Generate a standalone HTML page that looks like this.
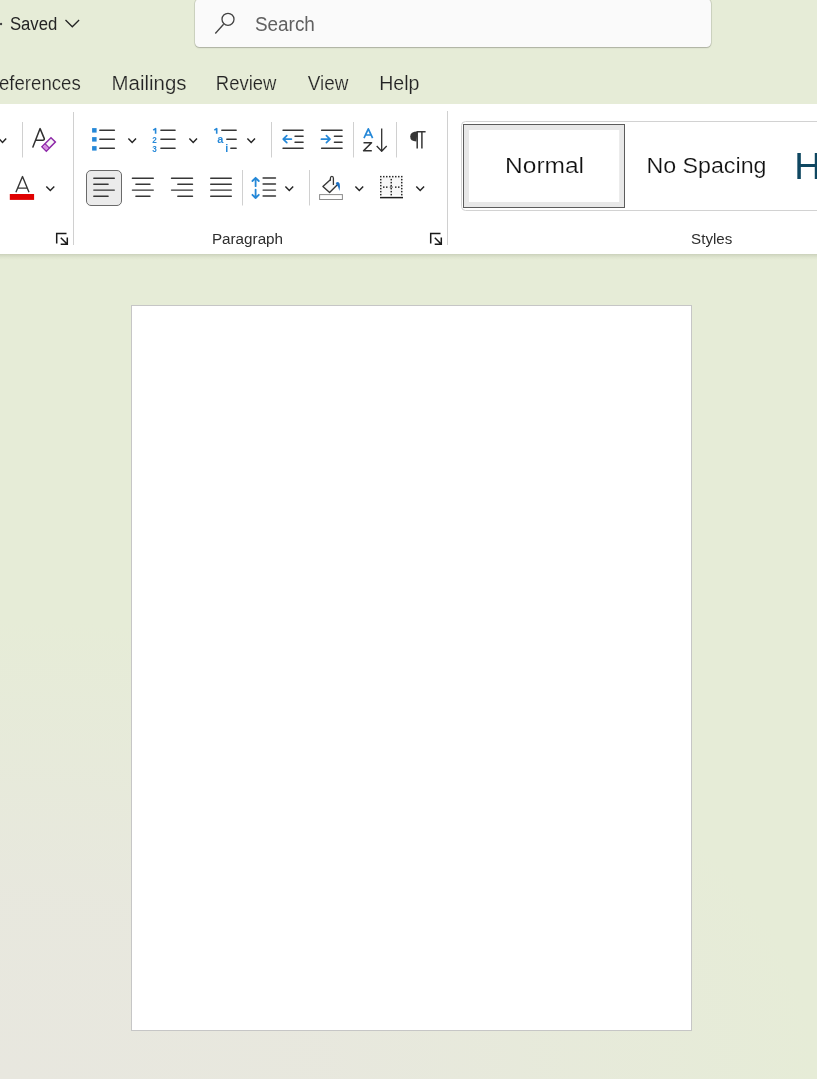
<!DOCTYPE html>
<html><head><meta charset="utf-8">
<style>
html,body{margin:0;padding:0;}
body{width:817px;height:1079px;overflow:hidden;position:relative;
background:radial-gradient(ellipse 820px 460px at 0px 1079px,rgba(232,231,223,1) 0%,rgba(232,231,223,0.85) 40%,rgba(232,231,223,0.4) 70%,rgba(232,231,223,0) 100%),#e6ecd7;
font-family:"Liberation Sans",sans-serif;}
.abs{position:absolute;}
#search{left:194.5px;top:-1px;width:516.5px;height:47.5px;background:#fafafa;border-radius:4.5px;
box-shadow:0 0 0 0.7px rgba(0,0,0,0.12),0 1px 1.5px rgba(0,0,0,0.18);}
#ribbon{left:-10px;top:104px;width:840px;height:150px;background:#ffffff;border-radius:0;
}
#rshadow{left:0;top:254px;width:817px;height:6px;background:linear-gradient(to bottom,rgba(60,70,40,0.16),rgba(60,70,40,0.10) 25%,rgba(60,70,40,0.04) 60%,rgba(60,70,40,0));}
#page{left:131px;top:305px;width:559px;height:724px;background:#fff;border:1px solid #c6c6c6;}
svg{position:absolute;left:0;top:0;will-change:transform;}
</style></head>
<body>
<div id="search" class="abs"></div>
<div id="ribbon" class="abs"></div>
<div id="rshadow" class="abs"></div>
<div id="page" class="abs"></div>
<svg width="817" height="1079" viewBox="0 0 817 1079" font-family="Liberation Sans, sans-serif">
  <!-- title bar -->
  <circle cx="1" cy="24" r="1.2" fill="#424242"/>
  <text id="t_saved" x="9.90" y="30.1" font-size="18" fill="#242424" textLength="47.40" lengthAdjust="spacingAndGlyphs">Saved</text>
  <path d="M65.5 20 L72.3 26.8 L79.1 20" fill="none" stroke="#242424" stroke-width="1.3"/>
  <!-- search -->
  <circle cx="228" cy="19.3" r="6" fill="none" stroke="#424242" stroke-width="1.3"/>
  <path d="M223.6 24.2 L215.3 33.5" fill="none" stroke="#424242" stroke-width="1.3"/>
  <text id="t_search" x="254.90" y="30.8" font-size="19.5" fill="#616161" textLength="60.00" lengthAdjust="spacingAndGlyphs">Search</text>
  <!-- tabs -->
  <text id="t_ref" x="-1.00" y="89.8" font-size="20" fill="#242424" textLength="81.70" lengthAdjust="spacingAndGlyphs" stroke="#e6ecd7" stroke-width="0.2">eferences</text>
  <text id="t_mail" x="111.60" y="89.8" font-size="20" fill="#242424" textLength="74.90" lengthAdjust="spacingAndGlyphs" stroke="#e6ecd7" stroke-width="0.2">Mailings</text>
  <text id="t_rev" x="215.80" y="89.8" font-size="20" fill="#242424" textLength="60.60" lengthAdjust="spacingAndGlyphs" stroke="#e6ecd7" stroke-width="0.2">Review</text>
  <text id="t_view" x="307.80" y="89.8" font-size="20" fill="#242424" textLength="40.60" lengthAdjust="spacingAndGlyphs" stroke="#e6ecd7" stroke-width="0.2">View</text>
  <text id="t_help" x="379.20" y="89.8" font-size="20" fill="#242424" textLength="40.30" lengthAdjust="spacingAndGlyphs" stroke="#e6ecd7" stroke-width="0.2">Help</text>

  <!-- ribbon separators -->
  <g stroke="#d0d0d0" stroke-width="1">
    <line x1="22.5" y1="122" x2="22.5" y2="157.5"/>
    <line x1="73.5" y1="112" x2="73.5" y2="245"/>
    <line x1="271.5" y1="122" x2="271.5" y2="157.5"/>
    <line x1="353.5" y1="122" x2="353.5" y2="157.5"/>
    <line x1="396.5" y1="122" x2="396.5" y2="157.5"/>
    <line x1="242.5" y1="170" x2="242.5" y2="205.5"/>
    <line x1="309.5" y1="170" x2="309.5" y2="205.5"/>
    <line x1="447.5" y1="111" x2="447.5" y2="245"/>
  </g>


  <!-- clear formatting -->
  <path d="M32.9 147 L40.1 128.6 L44.3 138.6 Q44.6 140.2 42.8 140.2 L36.3 140.2" fill="none" stroke="#303030" stroke-width="1.5" stroke-linejoin="round" stroke-linecap="round"/>
  <g transform="translate(48.65 144.45) rotate(-45)">
    <rect x="-6.4" y="-3.1" width="12.8" height="6.2" fill="#f6f6f6" stroke="#8e2aa8" stroke-width="1.5"/>
    <rect x="-5.7" y="-2.4" width="3.6" height="4.8" fill="#d98ee3"/>
    <line x1="-2.0" y1="-3.1" x2="-2.0" y2="3.1" stroke="#8e2aa8" stroke-width="1.2"/>
  </g>
  <!-- bullets -->
  <g fill="#2588d8">
    <rect x="92.1" y="128.1" width="4.5" height="4.5"/>
    <rect x="92.1" y="137.1" width="4.5" height="4.5"/>
    <rect x="92.1" y="146.1" width="4.5" height="4.5"/>
  </g>
  <g stroke="#363636" stroke-width="1.4" stroke-linecap="round">
    <line x1="99.8" y1="130.2" x2="114.4" y2="130.2"/>
    <line x1="99.8" y1="139.3" x2="114.4" y2="139.3"/>
    <line x1="99.8" y1="148.2" x2="114.4" y2="148.2"/>
    <line x1="160.9" y1="130.2" x2="175.1" y2="130.2"/>
    <line x1="160.9" y1="139.3" x2="175.1" y2="139.3"/>
    <line x1="160.9" y1="148.2" x2="175.1" y2="148.2"/>
    <line x1="221.8" y1="130.2" x2="236.2" y2="130.2"/>
    <line x1="226.8" y1="139.3" x2="236.2" y2="139.3"/>
    <line x1="230.8" y1="148.2" x2="236.2" y2="148.2"/>
  </g>
  <g fill="#2588d8" font-weight="bold" font-size="8.2">
    <path d="M153.2 130.2 L155.6 128.6 L155.6 133.8" fill="none" stroke="#2588d8" stroke-width="1.6" stroke-linejoin="round"/>
    <text x="152.2" y="142.9">2</text>
    <text x="152.2" y="152">3</text>
    <path d="M214.3 130.2 L216.7 128.6 L216.7 133.8" fill="none" stroke="#2588d8" stroke-width="1.6" stroke-linejoin="round"/>
    <text x="217.3" y="142.9" font-size="11">a</text>
    <text x="225.3" y="152" font-size="10.8">i</text>
  </g>
  <!-- indent -->
  <g stroke="#363636" stroke-width="1.4" stroke-linecap="round">
    <line x1="283" y1="130.2" x2="303.1" y2="130.2"/>
    <line x1="295" y1="136.3" x2="303.1" y2="136.3"/>
    <line x1="295" y1="142.2" x2="303.1" y2="142.2"/>
    <line x1="283" y1="148.2" x2="303.1" y2="148.2"/>
    <line x1="321.6" y1="130.2" x2="342.1" y2="130.2"/>
    <line x1="334.4" y1="136.3" x2="342.1" y2="136.3"/>
    <line x1="334.4" y1="142.2" x2="342.1" y2="142.2"/>
    <line x1="321.6" y1="148.2" x2="342.1" y2="148.2"/>
  </g>
  <g fill="none" stroke="#2588d8" stroke-width="1.7" stroke-linecap="round" stroke-linejoin="round">
    <path d="M291.4 139.1 L283.2 139.1 M286.8 135.6 L283.2 139.1 L286.8 142.6"/>
    <path d="M321.4 139.2 L330 139.2 M326.4 135.7 L330 139.2 L326.4 142.7"/>
  </g>
  <!-- sort -->
  <path d="M364 138.2 L368.3 128.8 L372.6 138.2 M365.5 135 L371.1 135" fill="none" stroke="#2588d8" stroke-width="1.7" stroke-linejoin="round"/>
  <path d="M363.5 142.8 L371.5 142.8 L363.6 150.8 L371.8 150.8" fill="none" stroke="#303030" stroke-width="1.6" stroke-linejoin="round"/>
  <path d="M381.7 128.4 L381.7 151 M376.7 146 L381.7 151.2 L386.7 146" fill="none" stroke="#303030" stroke-width="1.3" stroke-linejoin="round"/>
  <!-- pilcrow -->
  <path d="M417.6 131.6 Q410.2 131.6 410.2 136.6 Q410.2 141.4 416.4 141.6 Z" fill="#363636"/>
  <path d="M416.6 131.7 L425.6 131.7 M417.2 131.7 L417.2 148.6 M421.9 131.7 L421.9 148.6" fill="none" stroke="#363636" stroke-width="1.5"/>

  <!-- font color -->
  <path d="M15.9 192.2 L22.5 176.6 L29 192.2 M18 188.1 L27 188.1" fill="none" stroke="#363636" stroke-width="1.4" stroke-linejoin="round"/>
  <rect x="9.8" y="194" width="24.3" height="5.9" fill="#e00000"/>

  <!-- align left button -->
  <rect x="86.5" y="170.5" width="35" height="35" rx="4.5" fill="#ebebeb" stroke="#6a6a6a" stroke-width="1"/>
  <g stroke="#363636" stroke-width="1.4" stroke-linecap="round">
    <line x1="93.8" y1="178.2" x2="114.3" y2="178.2"/>
    <line x1="93.8" y1="184.2" x2="108.1" y2="184.2"/>
    <line x1="93.8" y1="190.1" x2="114.3" y2="190.1"/>
    <line x1="93.8" y1="196.2" x2="108.1" y2="196.2"/>
    <line x1="132.4" y1="178.2" x2="153.3" y2="178.2"/>
    <line x1="135.9" y1="184.2" x2="150" y2="184.2"/>
    <line x1="132.4" y1="190.1" x2="153.3" y2="190.1"/>
    <line x1="135.9" y1="196.2" x2="150" y2="196.2"/>
    <line x1="171.5" y1="178.2" x2="192.5" y2="178.2"/>
    <line x1="177.8" y1="184.2" x2="192.5" y2="184.2"/>
    <line x1="171.5" y1="190.1" x2="192.5" y2="190.1"/>
    <line x1="177.8" y1="196.2" x2="192.5" y2="196.2"/>
    <line x1="210.7" y1="178.2" x2="231.3" y2="178.2"/>
    <line x1="210.7" y1="184.2" x2="231.3" y2="184.2"/>
    <line x1="210.7" y1="190.1" x2="231.3" y2="190.1"/>
    <line x1="210.7" y1="196.2" x2="231.3" y2="196.2"/>
    <line x1="263.1" y1="178" x2="275.5" y2="178"/>
    <line x1="263.1" y1="184" x2="275.5" y2="184"/>
    <line x1="263.1" y1="190.1" x2="275.5" y2="190.1"/>
    <line x1="263.1" y1="196" x2="275.5" y2="196"/>
  </g>
  <!-- line spacing arrows -->
  <g fill="none" stroke="#2588d8" stroke-width="1.8" stroke-linecap="round" stroke-linejoin="round">
    <path d="M255.6 177.8 L255.6 186.2 M252.4 181 L255.6 177.8 L258.8 181"/>
    <path d="M255.6 189.6 L255.6 198 M252.4 194.8 L255.6 198 L258.8 194.8"/>
  </g>
  <!-- shading -->
  <rect x="319.6" y="194.6" width="22.8" height="4.9" fill="#fff" stroke="#8c8c8c" stroke-width="1"/>
  <path d="M330.6 179.6 L322.9 186.4 L329.6 192.4 L337.6 184.6" fill="#f8f8f8" stroke="#363636" stroke-width="1.4" stroke-linejoin="round"/>
  <path d="M330.4 180.2 L330.4 178.2 Q330.4 176.3 331.9 176.3 Q333.4 176.3 333.4 178.2 L333.4 184.4" fill="none" stroke="#363636" stroke-width="1.3" stroke-linecap="round"/>
  <path d="M335.7 182.9 Q338.6 180.8 339.7 183.8 Q340.4 186.8 339.4 191 Q338.5 186.5 336.6 184.5 Z" fill="#1a6fc4"/>
  <!-- borders -->
  <rect x="381" y="177" width="21" height="18" fill="#f7f7f7"/>
  <g fill="#2a2a2a"><rect x="380.0" y="175.9" width="1.5" height="1.5"/><rect x="383.0" y="175.9" width="1.5" height="1.5"/><rect x="386.0" y="175.9" width="1.5" height="1.5"/><rect x="389.0" y="175.9" width="1.5" height="1.5"/><rect x="392.0" y="175.9" width="1.5" height="1.5"/><rect x="395.0" y="175.9" width="1.5" height="1.5"/><rect x="398.0" y="175.9" width="1.5" height="1.5"/><rect x="401.0" y="175.9" width="1.5" height="1.5"/><rect x="380.0" y="178.9" width="1.5" height="1.5"/><rect x="401.0" y="178.9" width="1.5" height="1.5"/><rect x="390.5" y="178.9" width="1.5" height="1.5"/><rect x="380.0" y="181.9" width="1.5" height="1.5"/><rect x="401.0" y="181.9" width="1.5" height="1.5"/><rect x="390.5" y="181.9" width="1.5" height="1.5"/><rect x="380.0" y="184.9" width="1.5" height="1.5"/><rect x="401.0" y="184.9" width="1.5" height="1.5"/><rect x="390.5" y="184.9" width="1.5" height="1.5"/><rect x="380.0" y="187.9" width="1.5" height="1.5"/><rect x="401.0" y="187.9" width="1.5" height="1.5"/><rect x="390.5" y="187.9" width="1.5" height="1.5"/><rect x="380.0" y="190.9" width="1.5" height="1.5"/><rect x="401.0" y="190.9" width="1.5" height="1.5"/><rect x="390.5" y="190.9" width="1.5" height="1.5"/><rect x="380.0" y="193.9" width="1.5" height="1.5"/><rect x="401.0" y="193.9" width="1.5" height="1.5"/><rect x="390.5" y="193.9" width="1.5" height="1.5"/><rect x="383.0" y="186.4" width="1.5" height="1.5"/><rect x="386.0" y="186.4" width="1.5" height="1.5"/><rect x="395.0" y="186.4" width="1.5" height="1.5"/><rect x="398.0" y="186.4" width="1.5" height="1.5"/></g>
  <circle cx="391.25" cy="187.15" r="1.1" fill="none" stroke="#3a3a3a" stroke-width="0.7"/>
  <line x1="380" y1="197.6" x2="403" y2="197.6" stroke="#1e1e1e" stroke-width="1.5"/>
  <!-- launchers -->
  <g fill="none" stroke="#1a1a1a" stroke-width="1.5">
    <path d="M56.7 243.6 L56.7 233.6 L66.5 233.6"/>
    <path d="M60.8 237.8 L66.8 243.8 M60.7 244.3 L67.3 244.3 L67.3 237.6"/>
    <path d="M430.7 243.6 L430.7 233.6 L440.5 233.6"/>
    <path d="M434.8 237.8 L440.8 243.8 M434.7 244.3 L441.3 244.3 L441.3 237.6"/>
  </g>
  <text id="t_para" x="211.90" y="243.6" font-size="15.2" fill="#2e2e2e" textLength="71.20" lengthAdjust="spacingAndGlyphs">Paragraph</text>
  <text id="t_styles" x="691.10" y="243.8" font-size="15.2" fill="#2e2e2e" textLength="41.20" lengthAdjust="spacingAndGlyphs">Styles</text>

  <!-- styles gallery -->
  <rect x="461.5" y="121.5" width="400" height="89" rx="4" fill="#fff" stroke="#d2d2d2" stroke-width="1"/>
  <rect x="463.5" y="124.5" width="161" height="83" fill="#e8e8e8" stroke="#5c5c5c" stroke-width="1"/>
  <rect x="469" y="130" width="150.2" height="72" fill="#fff"/>
  <text id="t_normal" x="505.10" y="173" font-size="22.6" fill="#111" textLength="78.90" lengthAdjust="spacingAndGlyphs" stroke="#fff" stroke-width="0.2">Normal</text>
  <text id="t_nosp" x="646.40" y="173.2" font-size="22.6" fill="#111" textLength="120.10" lengthAdjust="spacingAndGlyphs" stroke="#fff" stroke-width="0.2">No Spacing</text>
  <text id="t_h" x="794.30" y="179" font-size="37.5" fill="#0f4761">H</text>

  <!-- chevrons -->
  <g fill="none" stroke="#242424" stroke-width="1.45">
    <path d="M-1.2 138.5 L2.5 142.4 L6.2 138.5"/>
    <path d="M128.4 138.5 L132.2 142.5 L136 138.5"/>
    <path d="M189.4 138.5 L193.2 142.5 L197 138.5"/>
    <path d="M247.4 138.5 L251.2 142.5 L255 138.5"/>
    <path d="M46.3 186.4 L50.3 190.4 L54.3 186.4"/>
    <path d="M285.4 186.4 L289.3 190.4 L293.2 186.4"/>
    <path d="M355.4 186.4 L359.3 190.4 L363.2 186.4"/>
    <path d="M416.3 186.4 L420.2 190.4 L424.1 186.4"/>
  </g>
</svg>
</body></html>
